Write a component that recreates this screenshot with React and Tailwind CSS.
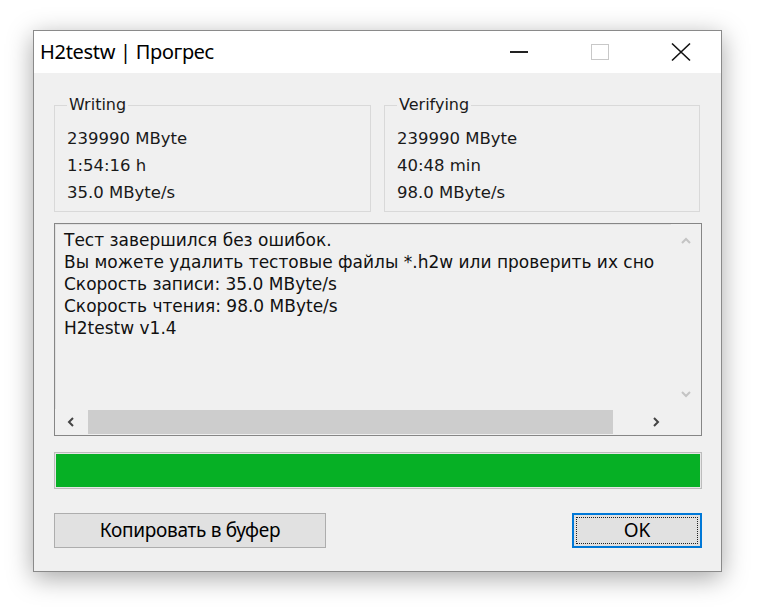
import React from 'react';

const ui = { fontFamily: '"DejaVu Sans", Verdana, sans-serif' };
const seg = { fontFamily: '"Noto Sans", "Open Sans", sans-serif' };

function Chevron({ dir, color }) {
  const d = {
    left: 'M7 2 L3 6 L7 10',
    right: 'M4 2 L8 6 L4 10',
    up: 'M2 8 L6 4 L10 8',
    down: 'M2 4 L6 8 L10 4',
  }[dir];
  return (
    <svg width="12" height="12" viewBox="0 0 12 12">
      <path d={d} fill="none" stroke={color} strokeWidth="2" />
    </svg>
  );
}

function GroupBox({ title, lines, className }) {
  return (
    <fieldset className={`border border-[#d9d9d9] pl-3 pr-2 pb-[5px] ${className}`}>
      <legend className="px-[2px] text-[16px] leading-[20px] text-[#1a1a1a]">{title}</legend>
      <div className="mt-[10px]">
        {lines.map((l) => (
          <div key={l} className="text-[16.5px] leading-[27px] text-[#1a1a1a]">{l}</div>
        ))}
      </div>
    </fieldset>
  );
}

const log = [
  'Тест завершился без ошибок.',
  'Вы можете удалить тестовые файлы *.h2w или проверить их сно',
  'Скорость записи: 35.0 MByte/s',
  'Скорость чтения: 98.0 MByte/s',
  'H2testw v1.4',
];

export default function App() {
  return (
    <div className="w-[768px] h-[614px] bg-white pt-[30px] pl-[33px]" style={ui}>
      <div className="w-[689px] h-[542px] flex flex-col border border-[#8a8a8a] shadow-[0_6px_24px_rgba(0,0,0,0.35)] bg-[#f0f0f0]">
        {/* title bar */}
        <div className="h-[42px] bg-white flex items-center shrink-0">
          <div className="pl-[6px] flex-1 text-[20px] text-black tracking-[-0.3px]" style={seg}>
            H2testw | Прогрес
          </div>
          <div className="w-[81px] h-full flex items-center justify-center">
            <div className="w-[18px] h-[2px] bg-[#222]" />
          </div>
          <div className="w-[81px] h-full flex items-center justify-center">
            <div className="w-[18px] h-[16px] border border-[#c8c8c8]" />
          </div>
          <div className="w-[81px] h-full flex items-center justify-center">
            <svg width="20" height="20" viewBox="0 0 20 20">
              <path d="M1 1.5 L19 18.5 M19 1.5 L1 18.5" stroke="#111" strokeWidth="1.6" fill="none" />
            </svg>
          </div>
        </div>

        {/* content */}
        <div className="flex-1 flex flex-col pt-[22px] pl-[20px] pr-[19px]">
          <div className="flex gap-[13px]">
            <GroupBox className="w-[317px]" title="Writing" lines={['239990 MByte', '1:54:16 h', '35.0 MByte/s']} />
            <GroupBox className="w-[316px]" title="Verifying" lines={['239990 MByte', '40:48 min', '98.0 MByte/s']} />
          </div>

          {/* log box */}
          <div className="mt-[11px] h-[213px] border border-[#868686] flex flex-col">
            <div className="flex-1 flex min-h-0">
              <div className="flex-1 overflow-hidden pl-[8px] pt-[4px] border-l border-t border-[#e2e2e2]">
                {log.map((l) => (
                  <div key={l} className="whitespace-nowrap text-[17px] leading-[22px] text-[#111]">{l}</div>
                ))}
              </div>
              <div className="w-[30px] flex flex-col justify-between items-center pt-[11px] pb-[9px]">
                <Chevron dir="up" color="#c4c4c4" />
                <Chevron dir="down" color="#c4c4c4" />
              </div>
            </div>
            <div className="h-[26px] flex shrink-0">
              <div className="w-[33px] flex items-center justify-center">
                <Chevron dir="left" color="#444" />
              </div>
              <div className="flex-1 flex items-stretch py-[1px]">
                <div className="w-[525px] bg-[#cdcdcd]" />
              </div>
              <div className="w-[30px] flex items-center justify-center">
                <Chevron dir="right" color="#444" />
              </div>
              <div className="w-[30px]" />
            </div>
          </div>

          {/* progress */}
          <div className="mt-[16px] h-[37px] border border-[#bcbcbc] bg-[#e6e6e6] p-[1px]">
            <div className="h-full w-full bg-[#06b025]" />
          </div>

          {/* buttons */}
          <div className="mt-[24px] flex justify-between">
            <button className="w-[272px] h-[35px] bg-[#e1e1e1] border border-[#adadad] text-[19px] tracking-[-0.3px] text-black" style={seg}>
              Копировать в буфер
            </button>
            <button className="w-[130px] h-[35px] bg-[#e1e1e1] border-2 border-[#0078d7] p-[2px] text-[19px] text-black" style={seg}>
              <div className="w-full h-full border border-dotted border-[#222] flex items-center justify-center">
                OK
              </div>
            </button>
          </div>
        </div>
      </div>
    </div>
  );
}
